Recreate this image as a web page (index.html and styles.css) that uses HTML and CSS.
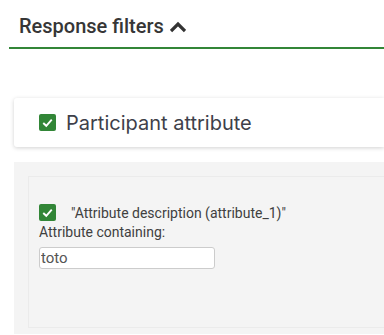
FILE: index.html
```html
<!DOCTYPE html>
<html lang="en">
<head>
    <meta charset="UTF-8">
    <title>Response filters</title>
    <link rel="stylesheet" href="styles.css">
</head>
<body>
    <div class="filters">
        <h2 class="filters-title">
            Response filters
            <svg class="chevron" viewBox="0 0 16 12" width="16" height="12">
                <path d="M1 10 L8 3 L15 10" fill="none" stroke="#333" stroke-width="3.2"/>
            </svg>
        </h2>

        <div class="card">
            <span class="check big"><svg viewBox="0 0 18 18"><path d="M4.5 9.5 L7.7 12.5 L13.5 6" fill="none" stroke="#fff" stroke-width="2"/></svg></span>
            <span class="card-title">Participant attribute</span>
        </div>

        <div class="panel">
            <div class="panel-box">
                <div class="attr-row">
                    <span class="check"><svg viewBox="0 0 18 18"><path d="M4.5 9.5 L7.7 12.5 L13.5 6" fill="none" stroke="#fff" stroke-width="2"/></svg></span>
                    <span class="attr-name">"Attribute description (attribute_1)"</span>
                </div>
                <label class="attr-label">Attribute containing:</label>
                <input class="attr-input" type="text" value="toto">
            </div>
        </div>
    </div>
</body>
</html>
```

FILE: styles.css
```css
body {
    margin: 0;
    font-family: 'Roboto', sans-serif;
    background-color: #ffffff;
    color: #333333;
    overflow: hidden;
}
.filters {
    padding: 14px 0 0 9px;
}
.filters-title {
    margin: 0;
    padding: 0 0 9px 10px;
    font-size: 20px;
    font-weight: 500;
    line-height: 24px;
    color: #363636;
    border-bottom: 2px solid #328637;
    display: flex;
    align-items: center;
    gap: 6px;
}
.chevron {
    margin-top: 1px;
}
.card {
    margin: 49px 0 0 5px;
    height: 49px;
    background-color: #ffffff;
    box-shadow: 0 1px 4px rgba(0, 0, 0, 0.18);
    border-radius: 3px 0 0 3px;
    display: flex;
    align-items: center;
    padding-left: 25px;
    gap: 10px;
}
.check {
    width: 17px;
    height: 17px;
    background-color: #328637;
    border-radius: 2px;
    display: inline-block;
    flex-shrink: 0;
}
.check svg {
    width: 17px;
    height: 17px;
    display: block;
}
.card-title {
    font-family: 'Inter', sans-serif;
    font-size: 20px;
    color: #3e3f4a;
}
.panel {
    margin: 15px 0 0 5px;
    background-color: #f4f4f4;
    padding: 14px 0 0 14px;
    height: 158px;
}
.panel-box {
    border: 1px solid #ebebeb;
    border-right: none;
    height: 123px;
    padding: 27px 0 0 10px;
}
.attr-row {
    display: flex;
    align-items: center;
    gap: 15px;
    font-size: 14px;
    color: #404040;
}
.attr-label {
    display: block;
    margin-top: 2px;
    font-size: 14px;
    line-height: 18px;
    color: #404040;
}
.attr-input {
    display: block;
    margin-top: 6px;
    width: 176px;
    height: 22px;
    box-sizing: border-box;
    border: 1px solid #cccccc;
    border-radius: 3px;
    padding: 0 1px;
    font-family: 'Roboto', sans-serif;
    font-size: 15px;
    color: #555555;
    background-color: #ffffff;
}
```
